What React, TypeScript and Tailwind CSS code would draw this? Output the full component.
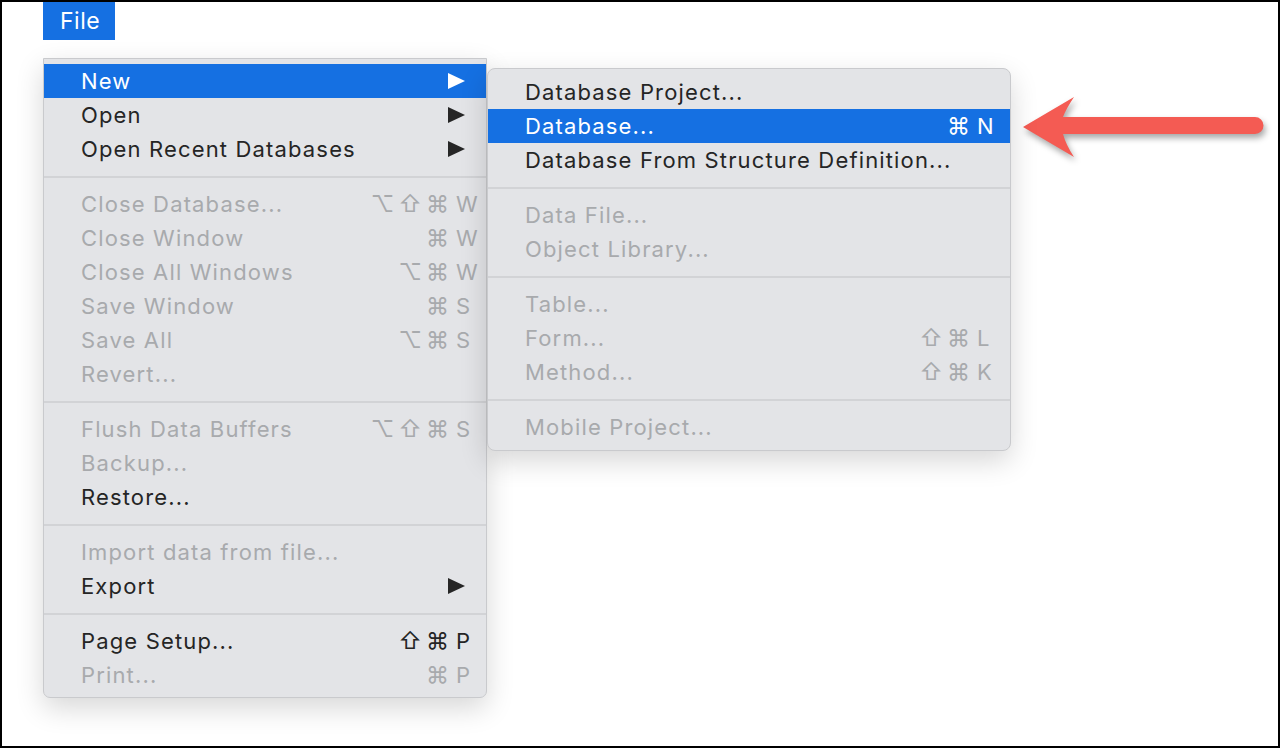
import React from "react";

type Item =
  | { sep: true }
  | {
      sep?: false;
      label: string;
      disabled?: boolean;
      active?: boolean;
      sub?: boolean;
      mods?: string;
      keyc?: string;
    };

const mainItems: Item[] = [
  { label: "New", active: true, sub: true },
  { label: "Open", sub: true },
  { label: "Open Recent Databases", sub: true },
  { sep: true },
  { label: "Close Database...", disabled: true, mods: "⌥⇧⌘", keyc: "W" },
  { label: "Close Window", disabled: true, mods: "⌘", keyc: "W" },
  { label: "Close All Windows", disabled: true, mods: "⌥⌘", keyc: "W" },
  { label: "Save Window", disabled: true, mods: "⌘", keyc: "S" },
  { label: "Save All", disabled: true, mods: "⌥⌘", keyc: "S" },
  { label: "Revert...", disabled: true },
  { sep: true },
  { label: "Flush Data Buffers", disabled: true, mods: "⌥⇧⌘", keyc: "S" },
  { label: "Backup...", disabled: true },
  { label: "Restore..." },
  { sep: true },
  { label: "Import data from file...", disabled: true },
  { label: "Export", sub: true },
  { sep: true },
  { label: "Page Setup...", mods: "⇧⌘", keyc: "P" },
  { label: "Print...", disabled: true, mods: "⌘", keyc: "P" },
];

const subItems: Item[] = [
  { label: "Database Project..." },
  { label: "Database...", active: true, mods: "⌘", keyc: "N" },
  { label: "Database From Structure Definition..." },
  { sep: true },
  { label: "Data File...", disabled: true },
  { label: "Object Library...", disabled: true },
  { sep: true },
  { label: "Table...", disabled: true },
  { label: "Form...", disabled: true, mods: "⇧⌘", keyc: "L" },
  { label: "Method...", disabled: true, mods: "⇧⌘", keyc: "K" },
  { sep: true },
  { label: "Mobile Project...", disabled: true },
];

function Row({ item, sub }: { item: Item; sub?: boolean }) {
  if (item.sep) {
    return (
      <div className="h-[21px] flex items-center">
        <div className="h-[2px] w-full bg-[#d2d3d6]" />
      </div>
    );
  }
  const color = item.active
    ? "text-white"
    : item.disabled
    ? "text-[#a8aaad]"
    : "text-[#252525]";
  return (
    <div
      className={`h-[34px] flex items-center pl-[37px] ${
        sub ? "pr-[15px]" : "pr-[10px]"
      } ${color} ${item.active ? "bg-[#1570e2]" : ""}`}
    >
      <span className="flex-1 whitespace-nowrap tracking-[1.15px]">{item.label}</span>
      {item.sub && (
        <svg width="17" height="16" viewBox="0 0 17 16" className="mr-[11px]">
          <polygon points="0,0 17,8 0,16" fill={item.active ? "#ffffff" : "#262626"} />
        </svg>
      )}
      {item.keyc && (
        <span className="flex items-center">
          <span className="text-right tracking-[4px] text-[23px]">{item.mods}</span>
          <span
            className={`${sub ? "w-[18px]" : "w-[20px]"} text-left tracking-[0px] ml-[3px]`}
          >
            {item.keyc}
          </span>
        </span>
      )}
    </div>
  );
}

export default function App() {
  return (
    <div
      className="w-[1280px] h-[748px] border-2 border-black bg-white overflow-hidden text-[22px] leading-none"
      style={{ fontFamily: '"Inter", "DejaVu Sans", sans-serif' }}
    >
      <div className="ml-[41px] w-[72px] h-[38px] bg-[#1570e2] text-white flex items-center pl-[17px] text-[23px] tracking-[0.5px]">
        File
      </div>
      <div className="flex items-start mt-[18px] ml-[41px]">
        <div className="w-[444px] shrink-0 bg-[#e3e4e7] border border-[#c9cacd] rounded-b-[7px] py-[5px] shadow-[0_10px_28px_rgba(0,0,0,0.16)] relative z-10">
          {mainItems.map((it, i) => (
            <Row key={i} item={it} />
          ))}
        </div>
        <div className="w-[524px] shrink-0 mt-[10px] bg-[#e3e4e7] border border-[#c9cacd] rounded-[8px] py-[6px] shadow-[0_10px_28px_rgba(0,0,0,0.16)] relative z-20 overflow-hidden">
          {subItems.map((it, i) => (
            <Row key={i} item={it} sub />
          ))}
        </div>
        <svg
          width="260"
          height="80"
          viewBox="0 0 260 80"
          className="shrink-0 mt-[32px] ml-[2px] drop-shadow-[2px_4px_3px_rgba(0,0,0,0.35)]"
        >
          <path
            d="M10,37 L61,7 Q53,19 50,27 L242,27 A8.5,8.5 0 0 1 242,44 L50,44 Q53,55 61,67 Z"
            fill="#f45b53"
          />
        </svg>
      </div>
    </div>
  );
}
